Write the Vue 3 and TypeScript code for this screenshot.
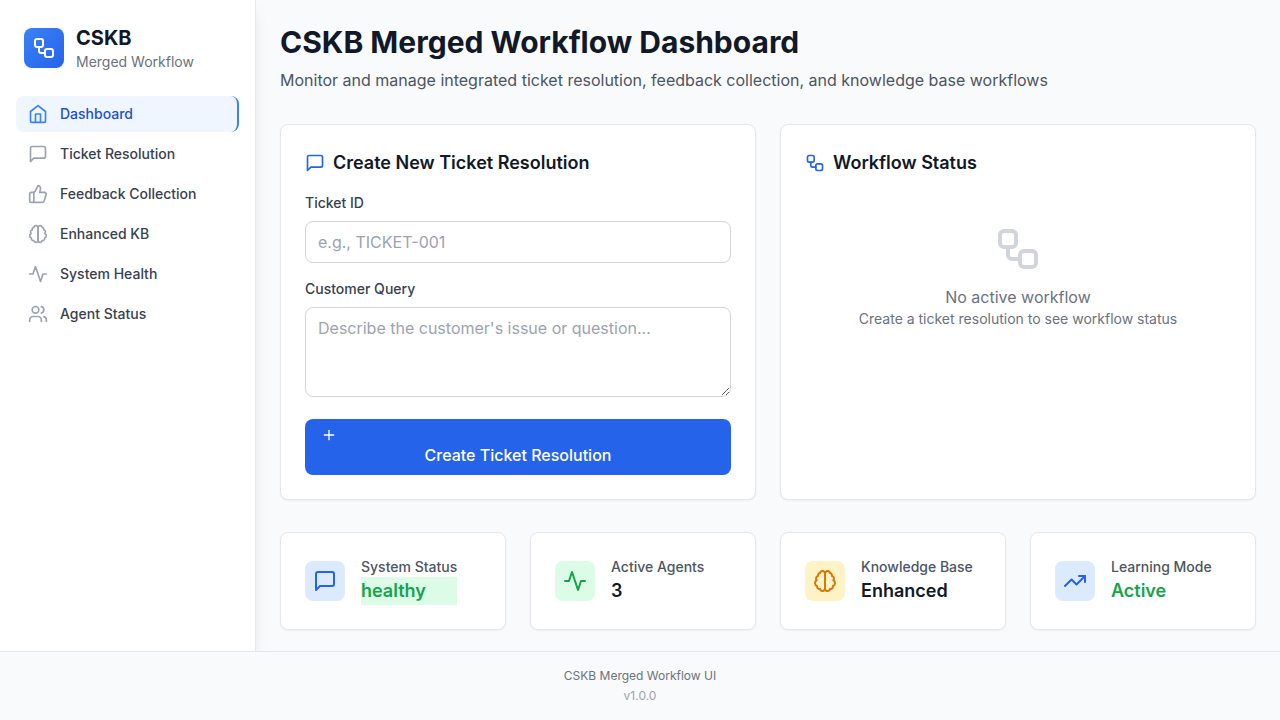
<script setup lang="ts">
import { defineComponent, h, ref } from 'vue'

type Shape = [tag: string, attrs: Record<string, string | number>]

const shapes: Record<string, Shape[]> = {
  workflow: [
    ['rect', { width: 8, height: 8, x: 3, y: 3, rx: 2 }],
    ['path', { d: 'M7 11v4a2 2 0 0 0 2 2h4' }],
    ['rect', { width: 8, height: 8, x: 13, y: 13, rx: 2 }],
  ],
  home: [
    ['path', { d: 'm3 9 9-7 9 7v11a2 2 0 0 1-2 2H5a2 2 0 0 1-2-2z' }],
    ['polyline', { points: '9 22 9 12 15 12 15 22' }],
  ],
  message: [['path', { d: 'M21 15a2 2 0 0 1-2 2H7l-4 4V5a2 2 0 0 1 2-2h14a2 2 0 0 1 2 2z' }]],
  thumb: [
    ['path', { d: 'M7 10v12' }],
    [
      'path',
      {
        d: 'M15 5.88 14 10h5.83a2 2 0 0 1 1.92 2.56l-2.33 8A2 2 0 0 1 17.5 22H4a2 2 0 0 1-2-2v-8a2 2 0 0 1 2-2h2.76a2 2 0 0 0 1.79-1.11L12 2h0a3.13 3.13 0 0 1 3 3.88Z',
      },
    ],
  ],
  brain: [
    [
      'path',
      {
        d: 'M9.5 2A2.5 2.5 0 0 1 12 4.5v15a2.5 2.5 0 0 1-4.96.44 2.5 2.5 0 0 1-2.96-3.08 3 3 0 0 1-.34-5.58 2.5 2.5 0 0 1 1.32-4.24 2.5 2.5 0 0 1 1.98-3A2.5 2.5 0 0 1 9.5 2Z',
      },
    ],
    [
      'path',
      {
        d: 'M14.5 2A2.5 2.5 0 0 0 12 4.5v15a2.5 2.5 0 0 0 4.96.44 2.5 2.5 0 0 0 2.96-3.08 3 3 0 0 0 .34-5.58 2.5 2.5 0 0 0-1.32-4.24 2.5 2.5 0 0 0-1.98-3A2.5 2.5 0 0 0 14.5 2Z',
      },
    ],
  ],
  activity: [['path', { d: 'M22 12h-4l-3 9L9 3l-3 9H2' }]],
  users: [
    ['path', { d: 'M16 21v-2a4 4 0 0 0-4-4H6a4 4 0 0 0-4 4v2' }],
    ['circle', { cx: 9, cy: 7, r: 4 }],
    ['path', { d: 'M22 21v-2a4 4 0 0 0-3-3.87' }],
    ['path', { d: 'M16 3.13a4 4 0 0 1 0 7.75' }],
  ],
  trending: [
    ['polyline', { points: '22 7 13.5 15.5 8.5 10.5 2 17' }],
    ['polyline', { points: '16 7 22 7 22 13' }],
  ],
  plus: [['path', { d: 'M5 12h14' }], ['path', { d: 'M12 5v14' }]],
}

const Icon = defineComponent({
  props: {
    name: { type: String, required: true },
    size: { type: Number, default: 20 },
  },
  setup(props) {
    return () =>
      h(
        'svg',
        {
          width: props.size,
          height: props.size,
          viewBox: '0 0 24 24',
          fill: 'none',
          stroke: 'currentColor',
          'stroke-width': 2,
          'stroke-linecap': 'round',
          'stroke-linejoin': 'round',
          'aria-hidden': 'true',
        },
        shapes[props.name].map(([tag, attrs]) => h(tag, attrs)),
      )
  },
})

const navItems = [
  { label: 'Dashboard', icon: 'home' },
  { label: 'Ticket Resolution', icon: 'message' },
  { label: 'Feedback Collection', icon: 'thumb' },
  { label: 'Enhanced KB', icon: 'brain' },
  { label: 'System Health', icon: 'activity' },
  { label: 'Agent Status', icon: 'users' },
]
const current = ref('Dashboard')

const stats = [
  { label: 'System Status', value: 'healthy', icon: 'message', tone: 'blue', valueTone: 'healthy' },
  { label: 'Active Agents', value: '3', icon: 'activity', tone: 'green', valueTone: '' },
  { label: 'Knowledge Base', value: 'Enhanced', icon: 'brain', tone: 'amber', valueTone: '' },
  { label: 'Learning Mode', value: 'Active', icon: 'trending', tone: 'blue', valueTone: 'success' },
]

const ticketId = ref('')
const query = ref('')
</script>

<template>
  <div class="page">
    <div class="shell">
      <aside class="sidebar">
        <div class="brand">
          <div class="logo"><Icon name="workflow" :size="24" /></div>
          <div>
            <div class="brand-name">CSKB</div>
            <div class="brand-sub">Merged Workflow</div>
          </div>
        </div>
        <nav class="nav">
          <a
            v-for="item in navItems"
            :key="item.label"
            class="nav-item"
            :class="{ active: item.label === current }"
            @click="current = item.label"
          >
            <Icon :name="item.icon" class="nav-icon" />
            {{ item.label }}
          </a>
        </nav>
      </aside>

      <main class="main">
        <header>
          <h1>CSKB Merged Workflow Dashboard</h1>
          <p class="lead">
            Monitor and manage integrated ticket resolution, feedback collection, and knowledge base workflows
          </p>
        </header>

        <div class="panels">
          <section class="card">
            <h2><Icon name="message" class="title-icon" />Create New Ticket Resolution</h2>
            <form class="form" @submit.prevent>
              <div>
                <label for="ticket-id">Ticket ID</label>
                <input id="ticket-id" v-model="ticketId" type="text" placeholder="e.g., TICKET-001" />
              </div>
              <div>
                <label for="query">Customer Query</label>
                <textarea
                  id="query"
                  v-model="query"
                  rows="3"
                  placeholder="Describe the customer's issue or question..."
                ></textarea>
              </div>
              <button type="submit">
                <Icon name="plus" :size="16" class="button-icon" />
                Create Ticket Resolution
              </button>
            </form>
          </section>

          <section class="card">
            <h2><Icon name="workflow" class="title-icon" />Workflow Status</h2>
            <div class="empty">
              <Icon name="workflow" :size="48" class="empty-icon" />
              <p>No active workflow</p>
              <p class="empty-hint">Create a ticket resolution to see workflow status</p>
            </div>
          </section>
        </div>

        <div class="stats">
          <div v-for="stat in stats" :key="stat.label" class="card stat">
            <div class="stat-icon" :class="stat.tone"><Icon :name="stat.icon" :size="24" /></div>
            <div>
              <p class="stat-label">{{ stat.label }}</p>
              <p class="stat-value" :class="stat.valueTone">{{ stat.value }}</p>
            </div>
          </div>
        </div>
      </main>
    </div>

    <footer class="footer">
      <p>CSKB Merged Workflow UI</p>
      <p class="version">v1.0.0</p>
    </footer>
  </div>
</template>

<style>
body {
  margin: 0;
  background: #f9fafb;
}
</style>

<style scoped>
.page,
.page * {
  box-sizing: border-box;
}
.page {
  display: flex;
  flex-direction: column;
  height: 100vh;
  overflow: hidden;
  background: #f9fafb;
  color: #111827;
  font-family: Inter, 'Liberation Sans', sans-serif;
  font-size: 16px;
  line-height: 24px;
}
h1,
h2,
p {
  margin: 0;
}
svg {
  display: block;
  flex-shrink: 0;
}
.shell {
  display: flex;
  flex: 1;
  min-height: 0;
}
.sidebar {
  width: 256px;
  flex-shrink: 0;
  background: #fff;
  border-right: 1px solid #e5e7eb;
  box-shadow: 0 10px 15px -3px rgb(0 0 0 / 0.1), 0 4px 6px -4px rgb(0 0 0 / 0.1);
}
.brand {
  display: flex;
  align-items: center;
  gap: 12px;
  padding: 24px;
}
.logo {
  display: flex;
  align-items: center;
  justify-content: center;
  width: 40px;
  height: 40px;
  border-radius: 8px;
  background: linear-gradient(to bottom right, #3b82f6, #2563eb);
  color: #fff;
}
.brand-name {
  font-size: 20px;
  line-height: 28px;
  font-weight: 700;
}
.brand-sub {
  font-size: 14px;
  line-height: 20px;
  color: #6b7280;
}
.nav {
  display: flex;
  flex-direction: column;
  gap: 4px;
  padding: 0 16px;
}
.nav-item {
  display: flex;
  align-items: center;
  gap: 12px;
  padding: 8px 12px;
  border-radius: 8px;
  font-size: 14px;
  line-height: 20px;
  font-weight: 500;
  color: #374151;
  cursor: pointer;
}
.nav-item.active {
  background: #eff6ff;
  color: #1d4ed8;
  border-right: 2px solid #3b82f6;
}
.nav-icon {
  color: #9ca3af;
}
.active .nav-icon {
  color: #3b82f6;
}
.main {
  display: flex;
  flex-direction: column;
  flex: 1;
  gap: 32px;
  padding: 24px;
}
h1 {
  font-size: 30px;
  line-height: 36px;
  font-weight: 700;
}
.lead {
  margin-top: 8px;
  color: #4b5563;
}
.panels {
  display: grid;
  grid-template-columns: repeat(2, 1fr);
  gap: 24px;
}
.card {
  padding: 24px;
  background: #fff;
  border: 1px solid #e5e7eb;
  border-radius: 8px;
  box-shadow: 0 1px 2px 0 rgb(0 0 0 / 0.05);
}
h2 {
  display: flex;
  align-items: center;
  gap: 8px;
  margin-bottom: 16px;
  font-size: 18px;
  line-height: 28px;
  font-weight: 600;
}
.title-icon {
  color: #2563eb;
}
.form {
  display: flex;
  flex-direction: column;
  gap: 16px;
}
label {
  display: block;
  margin-bottom: 8px;
  font-size: 14px;
  line-height: 20px;
  font-weight: 500;
  color: #374151;
}
input,
textarea {
  display: block;
  width: 100%;
  margin: 0;
  padding: 8px 12px;
  border: 1px solid #d1d5db;
  border-radius: 8px;
  background: #fff;
  color: inherit;
  font: inherit;
}
input {
  height: 42px;
}
textarea {
  height: 90px;
  margin-bottom: 6px;
  resize: vertical;
}
input::placeholder,
textarea::placeholder {
  color: #9ca3af;
}
button {
  width: 100%;
  padding: 8px 16px;
  border: 0;
  border-radius: 8px;
  background: #2563eb;
  color: #fff;
  font: inherit;
  font-weight: 500;
  text-align: center;
  cursor: pointer;
}
.empty {
  padding: 32px 0;
  text-align: center;
  color: #6b7280;
}
.empty-icon {
  margin: 0 auto 12px;
  color: #d1d5db;
}
.empty-hint {
  font-size: 14px;
  line-height: 20px;
}
.stats {
  display: grid;
  grid-template-columns: repeat(4, 1fr);
  gap: 24px;
}
.stat {
  display: flex;
  align-items: center;
  gap: 16px;
}
.stat-icon {
  padding: 8px;
  border-radius: 8px;
}
.blue {
  background: #dbeafe;
  color: #2563eb;
}
.green {
  background: #dcfce7;
  color: #16a34a;
}
.amber {
  background: #fef3c7;
  color: #d97706;
}
.stat-label {
  font-size: 14px;
  line-height: 20px;
  font-weight: 500;
  color: #4b5563;
}
.stat-value {
  font-size: 18px;
  line-height: 28px;
  font-weight: 600;
}
.success,
.healthy {
  color: #16a34a;
}
.healthy {
  background: #dcfce7;
}
.footer {
  position: relative;
  display: flex;
  flex-direction: column;
  gap: 4px;
  padding: 16px;
  border-top: 1px solid #e5e7eb;
  background: #f9fafb;
  text-align: center;
  font-size: 12px;
  line-height: 16px;
  color: #6b7280;
}
.version {
  color: #9ca3af;
}
</style>
